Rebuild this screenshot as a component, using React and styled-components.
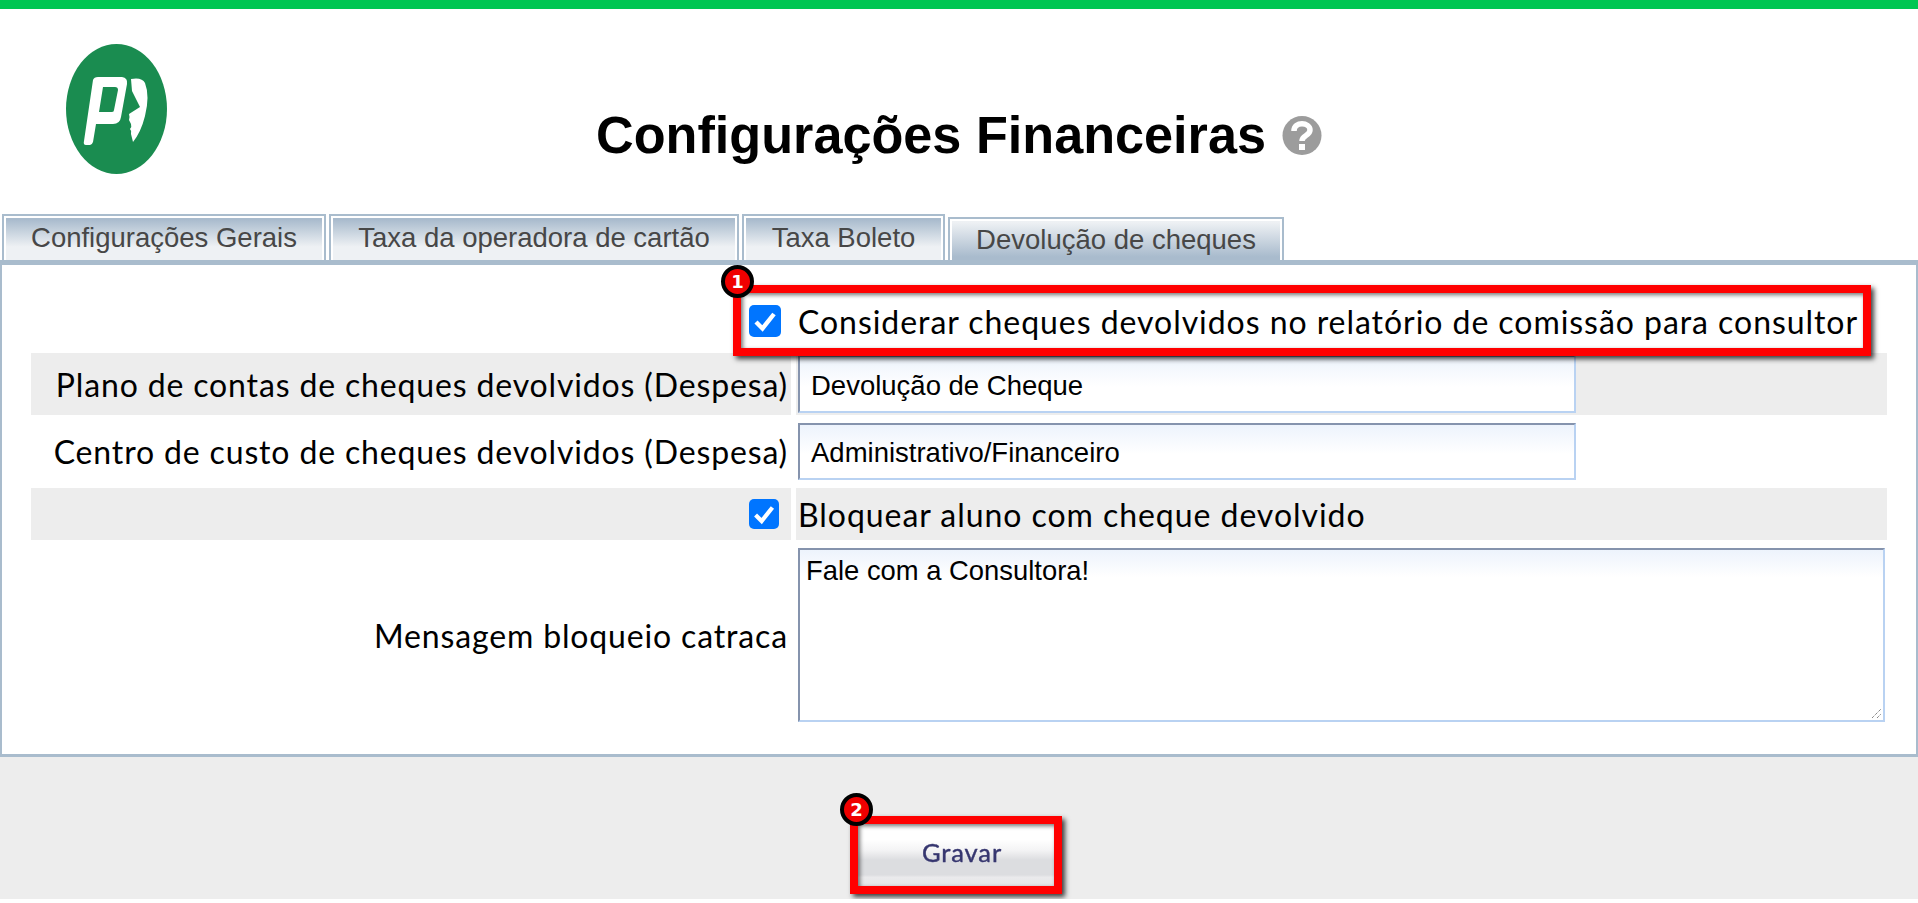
import styled, { createGlobalStyle } from "styled-components";

const GlobalStyle = createGlobalStyle`
  html, body {
    margin: 0;
    padding: 0;
    background: #fff;
  }
  * {
    box-sizing: border-box;
  }
`;

const Page = styled.div`
  width: 1918px;
  height: 899px;
  display: flex;
  flex-direction: column;
  font-family: "Liberation Sans", Arial, sans-serif;
`;

const TopBar = styled.div`
  height: 9px;
  background: #00c652;
`;

const Header = styled.header`
  height: 205px;
  padding: 35px 0 0 66px;
  position: relative;
  display: flex;
`;

const LogoWrap = styled.div`
  filter: blur(0.5px);
`;

const TitleRow = styled.div`
  position: absolute;
  left: 0;
  right: 0;
  top: 96px;
  display: flex;
  justify-content: center;
  align-items: center;
  gap: 16px;
`;

const Title = styled.h1`
  margin: 0;
  font-size: 52.2px;
  line-height: 60px;
  font-weight: 700;
  color: #000;
`;

const Tabs = styled.nav`
  height: 46px;
  padding-left: 2px;
  display: flex;
  align-items: flex-end;
  gap: 3px;
`;

const Tab = styled.div`
  height: ${(p) => (p.$active ? "43px" : "46px")};
  width: ${(p) => p.$w}px;
  border: 2px solid #a9bccd;
  border-bottom: none;
  box-shadow: inset 0 2px 0 #fff, inset 2px 0 0 #fff, inset -2px 0 0 #fff;
  background: ${(p) =>
    p.$active
      ? "linear-gradient(#eef1f4 8%, #a9bbcd 92%)"
      : "linear-gradient(#a9bbcd 8%, #eef1f4 70%)"};
  color: #474747;
  font-size: 27.5px;
  line-height: ${(p) => (p.$active ? "42px" : "44px")};
  text-align: center;
  white-space: nowrap;
`;

const Panel = styled.section`
  height: 497px;
  border: 2px solid #a9bccd;
  border-top: 5px solid #a9bccd;
  border-bottom-width: 3px;
  padding: 30px 29px;
  display: grid;
  grid-template-columns: 760px 1091px;
  grid-template-rows: 52px 62px 61px 52px 178px;
  column-gap: 5px;
  row-gap: 6px;
  background: #fff;
`;

const Cell = styled.div`
  display: flex;
  align-items: center;
  position: relative;
  background: ${(p) => (p.$shaded ? "#ededed" : "#fff")};
  justify-content: ${(p) => (p.$label ? "flex-end" : "flex-start")};
  padding: ${(p) => (p.$label ? "0 3px 0 0" : "0 0 0 2px")};
  font-family: Lato, "Open Sans", sans-serif;
  font-size: 32px;
  letter-spacing: ${(p) => (p.$label ? "0.85px" : "0.95px")};
  color: #000;
  white-space: nowrap;
`;

const Check = styled.span`
  width: ${(p) => p.$size}px;
  height: ${(p) => p.$size}px;
  margin-right: ${(p) => p.$mr}px;
  border-radius: 5px;
  background: #0075ff;
  display: flex;
  align-items: center;
  justify-content: center;
`;

const TextField = styled.div`
  width: 778px;
  height: ${(p) => p.$h}px;
  border: 2px solid #8593ad;
  border-right-color: #b9d2f2;
  border-bottom-color: #b9d2f2;
  background: linear-gradient(#edf3fc, #fff 55%);
  padding: 3px 0 0 11px;
  display: flex;
  align-items: center;
  font-family: "Liberation Sans", Arial, sans-serif;
  font-size: 27.5px;
  letter-spacing: 0;
  color: #000;
`;

const TextArea = styled.div`
  width: 1087px;
  height: 174px;
  margin-top: 2px;
  border: 2px solid #8593ad;
  border-right-color: #b9d2f2;
  border-bottom-color: #b9d2f2;
  background: linear-gradient(#edf3fc, #fff 16%);
  padding: 5px 0 0 6px;
  position: relative;
  align-self: flex-start;
  font-family: "Liberation Sans", Arial, sans-serif;
  font-size: 27.4px;
  line-height: 32px;
  letter-spacing: 0;
  color: #000;
`;

const Grip = styled.svg`
  position: absolute;
  right: 1px;
  bottom: 1px;
`;

const Footer = styled.footer`
  flex: 1;
  background: #ededed;
  display: flex;
  justify-content: center;
  padding-top: 67px;
`;

const SaveButton = styled.div`
  width: 196px;
  height: 62px;
  margin-left: -6px;
  padding-left: 12px;
  position: relative;
  background: linear-gradient(#fff 25%, #f4f4f5 42%, #dcdde0 58%, #dcdde0 82%, #eaeaec 86%, #e6e6e8);
  text-align: center;
`;

const SaveLabel = styled.span`
  display: block;
  color: #36366f;
  font-family: Lato, "Open Sans", sans-serif;
  font-size: 25.5px;
  letter-spacing: 0.9px;
  line-height: 56px;
  -webkit-text-stroke: 0.4px #36366f;
  filter: blur(0.6px);
`;

const Highlight = styled.div`
  position: absolute;
  z-index: 2;
  border: 8px solid #ff0000;
  box-shadow: 3px 3px 5px rgba(0, 0, 0, 0.75), inset 2px 2px 4px rgba(0, 0, 0, 0.55);
  pointer-events: none;
  left: ${(p) => p.$left}px;
  top: ${(p) => p.$top}px;
  width: ${(p) => p.$w}px;
  height: ${(p) => p.$h}px;
`;

const Badge = styled.span`
  position: absolute;
  left: ${(p) => p.$left}px;
  top: ${(p) => p.$top}px;
  width: 33px;
  height: 33px;
  border-radius: 50%;
  border: 4px solid #000;
  background: #f00000;
  color: #fff;
  font-family: "DejaVu Sans", sans-serif;
  font-size: 18px;
  font-weight: 700;
  letter-spacing: 0;
  line-height: 25px;
  text-align: center;
`;

const Logo = () => (
  <svg width="102" height="131" viewBox="0 0 102 131">
    <ellipse cx="50.5" cy="65" rx="50.5" ry="65" fill="#1a8c50" />
    <path
      fillRule="evenodd"
      fill="#fff"
      d="M27 36 Q28 33 32 33 L56 33 Q62 34 61 40 L55 73 Q54 80 47 80 L30 80 L27 98 Q26 101 24 101 L20 101 Q17 101 18 97 Z M37 43 L33 68 L46 68 Q48 68 48 66 L52 46 Q52 43 49 43 Z"
    />
    <path
      fill="#fff"
      d="M65 35 Q76 33 79 39 Q84 52 79 72 Q75 88 67 98 L65 90 Q66 87 64 85 Q66 83 65 80 L63 76 Q64 73 63 70 L74 63 L66 47 Z"
    />
  </svg>
);

const HelpIcon = () => (
  <svg width="40" height="39" viewBox="0 0 40 39">
    <circle cx="20" cy="19.5" r="19.5" fill="#9c9c9c" />
    <path
      fill="none"
      stroke="#fff"
      strokeWidth="5.5"
      d="M12 15 C12 5 28 6 28 14 C28 20 20 19 20 25"
    />
    <rect x="17" y="28" width="6" height="6" fill="#fff" />
  </svg>
);

const CheckMark = ({ size }) => (
  <svg width={size} height={size} viewBox="0 0 32 32">
    <path d="M7 17 L13.5 23.5 L25 9" fill="none" stroke="#fff" strokeWidth="4.4" />
  </svg>
);

const ResizeGrip = () => (
  <Grip width="10" height="10" viewBox="0 0 10 10">
    <path d="M0 9 L9 0 M5 9 L9 5" stroke="#555" strokeWidth="1" strokeDasharray="1 1" />
  </Grip>
);

const App = () => (
  <>
    <GlobalStyle />
    <Page>
      <TopBar />
      <Header>
        <LogoWrap>
          <Logo />
        </LogoWrap>
        <TitleRow>
          <Title>Configurações Financeiras</Title>
          <HelpIcon />
        </TitleRow>
      </Header>
      <Tabs>
        <Tab $w={324}>Configurações Gerais</Tab>
        <Tab $w={410}>Taxa da operadora de cartão</Tab>
        <Tab $w={203}>Taxa Boleto</Tab>
        <Tab $w={336} $active>
          Devolução de cheques
        </Tab>
      </Tabs>
      <Panel>
        <Cell $label>
          <Check $size={32} $mr={7}>
            <CheckMark size={32} />
          </Check>
          <Highlight $left={702} $top={-10} $w={1138} $h={71}>
            <Badge $left={-20} $top={-28}>1</Badge>
          </Highlight>
        </Cell>
        <Cell>Considerar cheques devolvidos no relatório de comissão para consultor</Cell>

        <Cell $label $shaded>
          Plano de contas de cheques devolvidos (Despesa)
        </Cell>
        <Cell $shaded>
          <TextField $h={58}>Devolução de Cheque</TextField>
        </Cell>

        <Cell $label>Centro de custo de cheques devolvidos (Despesa)</Cell>
        <Cell>
          <TextField $h={57}>Administrativo/Financeiro</TextField>
        </Cell>

        <Cell $label $shaded>
          <Check $size={30} $mr={9}>
            <CheckMark size={30} />
          </Check>
        </Cell>
        <Cell $shaded>Bloquear aluno com cheque devolvido</Cell>

        <Cell $label>Mensagem bloqueio catraca</Cell>
        <Cell>
          <TextArea>
            Fale com a Consultora!
            <ResizeGrip />
          </TextArea>
        </Cell>
      </Panel>
      <Footer>
        <SaveButton>
          <SaveLabel>Gravar</SaveLabel>
          <Highlight $left={-8} $top={-8} $w={212} $h={78}>
            <Badge $left={-18} $top={-31}>2</Badge>
          </Highlight>
        </SaveButton>
      </Footer>
    </Page>
  </>
);

export default App;
